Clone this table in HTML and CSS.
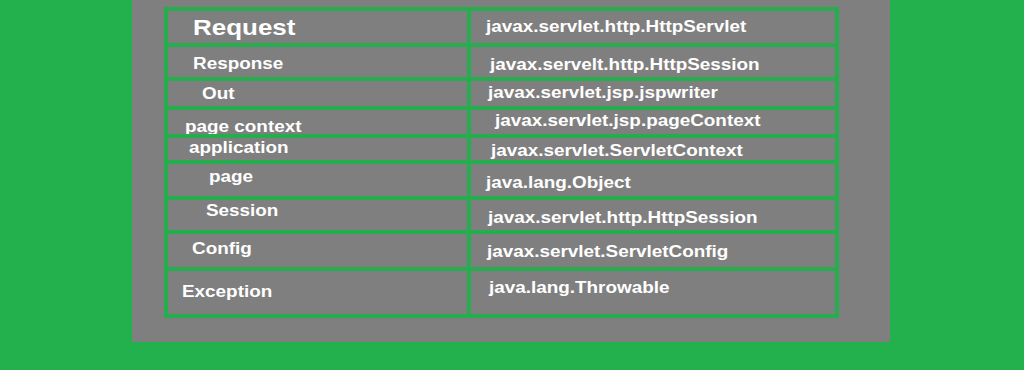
FILE: index.html
```html
<!DOCTYPE html>
<html>
<head>
<meta charset="utf-8">
<link rel="stylesheet" href="styles.css">
</head>
<body>
<div class="panel">
  <div class="grid">
    <div class="cell l r1 big"><span>Request</span></div><div class="cell r r1"><span>javax.servlet.http.HttpServlet</span></div>
    <div class="cell l r2"><span>Response</span></div><div class="cell r r2"><span>javax.servelt.http.HttpSession</span></div>
    <div class="cell l r3"><span>Out</span></div><div class="cell r r3"><span>javax.servlet.jsp.jspwriter</span></div>
    <div class="cell l r4"><span>page context</span></div><div class="cell r r4"><span>javax.servlet.jsp.pageContext</span></div>
    <div class="cell l r5"><span>application</span></div><div class="cell r r5"><span>javax.servlet.ServletContext</span></div>
    <div class="cell l r6"><span>page</span></div><div class="cell r r6"><span>java.lang.Object</span></div>
    <div class="cell l r7"><span>Session</span></div><div class="cell r r7"><span>javax.servlet.http.HttpSession</span></div>
    <div class="cell l r8"><span>Config</span></div><div class="cell r r8"><span>javax.servlet.ServletConfig</span></div>
    <div class="cell l r9"><span>Exception</span></div><div class="cell r r9"><span>java.lang.Throwable</span></div>
  </div>
</div>
</body>
</html>
```
FILE: styles.css
```css
html, body {
  margin: 0;
  padding: 0;
  background: #22b14c;
  width: 1024px;
  height: 370px;
  overflow: hidden;
}
.panel {
  margin-left: 132px;
  width: 758px;
  height: 342px;
  background: #7f7f7f;
  padding-top: 7px;
  box-sizing: border-box;
}
.grid {
  margin-left: 32px;
  width: 675px;
  box-sizing: border-box;
  display: grid;
  grid-template-columns: 299px 364px;
  grid-template-rows: 32px 30px 25px 24px 22px 32px 30px 33px 43px;
  gap: 4px;
  padding: 4px;
  background: #25ad4e;
}
.cell {
  background: #7f7f7f;
  color: #fff;
  font-family: "Liberation Sans", Arial, sans-serif;
  font-weight: bold;
  font-size: 16px;
  line-height: 16px;
  white-space: nowrap;
  box-sizing: border-box;
  overflow: hidden;
}
.cell span {
  display: inline-block;
  transform: scaleX(1.18);
  transform-origin: 0 50%;
}
.big {
  font-size: 22px;
  line-height: 22px;
}
.l.r1 { padding: 6px 0 0 25px; }
.r.r1 { padding: 8px 0 0 15px; }
.l.r2 { padding: 9px 0 0 25px; }
.r.r2 { padding: 10px 0 0 19px; }
.l.r3 { padding: 5px 0 0 34px; }
.r.r3 { padding: 4px 0 0 17px; }
.l.r4 { padding: 9px 0 0 17px; }
.r.r4 { padding: 3px 0 0 24px; }
.l.r5 { padding: 2px 0 0 21px; }
.r.r5 { padding: 5px 0 0 20px; }
.l.r6 { padding: 5px 0 0 41px; }
.r.r6 { padding: 11px 0 0 15px; }
.l.r7 { padding: 3px 0 0 38px; }
.r.r7 { padding: 10px 0 0 17px; }
.l.r8 { padding: 7px 0 0 24px; }
.r.r8 { padding: 10px 0 0 16px; }
.l.r9 { padding: 13px 0 0 14px; }
.r.r9 { padding: 9px 0 0 18px; }
```
